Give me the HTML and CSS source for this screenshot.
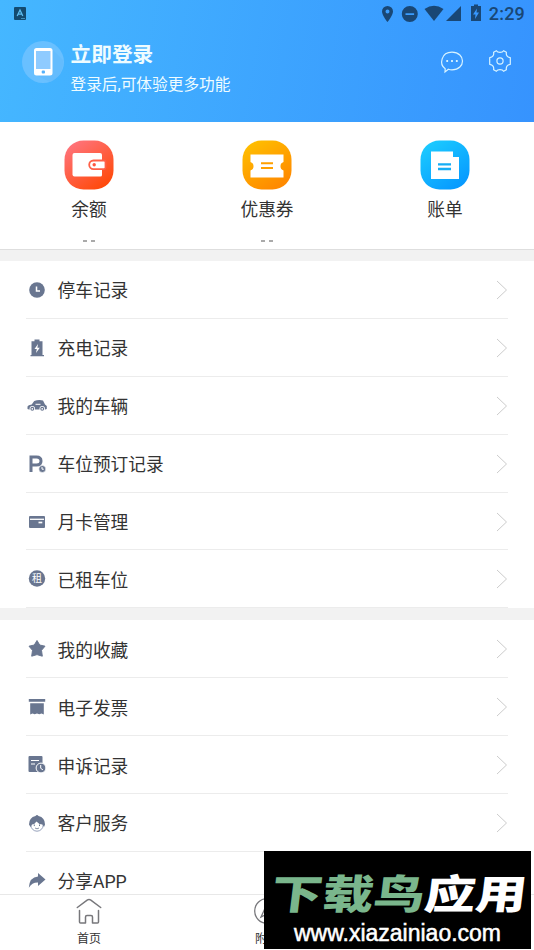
FILE: index.html
```html
<!DOCTYPE html>
<html lang="zh-CN">
<head>
<meta charset="utf-8">
<title>我的</title>
<link rel="stylesheet" href="styles.css">
</head>
<body>
<div class="app">
  <header class="header">
    <div class="status">
      <svg class="status-app" width="12" height="13" viewBox="0 0 12 13"><rect width="12" height="13" rx="1" fill="#134a70"/><path d="M3.2 9 6 3l2.800 6M4.200 7.200h3.600" fill="none" stroke="#5dbcf0" stroke-width="1.300"/><path d="M7 11.500h4" stroke="#5dbcf0" stroke-width=".6"/></svg>
      <div class="status-right">
        <svg width="114" height="20" viewBox="0 0 114 20" fill="#194775">
          <path fill-rule="evenodd" d="M11.500 6a5.500 5.500 0 0 0-5.500 5.500C6 15.500 11.500 22 11.500 22S17 15.500 17 11.500A5.500 5.500 0 0 0 11.500 6zm0 3.500a2 2 0 1 1 0 4 2 2 0 0 1 0-4z" transform="translate(0 -6)"/>
          <path fill-rule="evenodd" d="M33.800 0a7.800 7.800 0 1 0 0 16 7.800 7.800 0 0 0 0-16zM29.500 7.200h8.600v1.700h-8.600z"/>
          <path d="M48.500 3Q58-3.500 67.500 3L58 15z"/>
          <path d="M85 0v15H70z"/>
          <path fill-rule="evenodd" d="M95 0h3v-1.500h4V0h3v15H95zM101 2.500l-4 6h2.500L99 13l4-6.500h-2.500z"/>
        </svg>
        <span class="time">2:29</span>
      </div>
    </div>
    <div class="profile">
      <svg class="avatar" width="42" height="42" viewBox="0 0 42 42"><circle cx="21" cy="21" r="21" fill="#69c0ff"/><path d="M31 9 41 19a21 21 0 0 1-13 22L14 34z" fill="#5fb7fb" opacity=".5"/><rect x="12" y="7" width="18.500" height="27.500" rx="2.500" fill="#fff"/><path d="M14 10h14.500v18H14z" fill="#8fcbff"/><rect x="19.700" y="29.500" width="3.300" height="3" rx="1" fill="#55b1fa"/></svg>
      <div class="login"><h1>立即登录</h1><p>登录后,可体验更多功能</p></div>
      <svg width="24" height="24" viewBox="0 0 24 24" fill="none" stroke="#d7f3ff" stroke-width="1.200"><path d="M5.200 18.700C-1 14.500 1 2.200 12 2.200c14 0 14 17.600 0 17.600-1.500 0-2.600-.2-3.600-.6L5 22z"/><path d="M6.300 11h1.800m3 0h1.800m3 0h1.800" stroke-width="1.900"/></svg>
      <svg class="gear" width="24" height="24" viewBox="0 0 24 24" fill="none" stroke="#d7f3ff" stroke-width="1.200" stroke-linejoin="round"><circle cx="12" cy="12" r="3.100"/><path d="M8.400 1.700Q9.300 3.300 12 3.300t3.600-1.600l2.800 1.600q-.8 4.600 3.900 5.400v6.600q-4.700.8-3.900 5.400l-2.800 1.600Q14.700 20.700 12 20.700t-3.600 1.600l-2.800-1.600q.8-4.600-3.900-5.400V8.700q4.700-.8 3.900-5.400z"/></svg>
    </div>
  </header>

  <main class="content">
    <section class="quick">
      <div class="quick-item">
        <svg width="50" height="50" viewBox="0 0 50 50"><defs><linearGradient id="red" x1="0" y1="0" x2=".7" y2="1"><stop stop-color="#ff7888"/><stop offset="1" stop-color="#ff4a0c"/></linearGradient></defs><rect x=".5" y=".5" width="49" height="49" rx="19" fill="url(#red)"/><path d="M10.500 13H36q2 0 2 2v20q0 1.500-1.500 1.500H10.500q-2 0-2-2V15q0-2 2-2z" fill="#fff"/><path d="M40 20.500H29.500a4.300 4.300 0 0 0 0 8.600H40q1.500 0 1.500-1.500V22q0-1.500-1.500-1.500z" fill="#fff" stroke="#ff6048" stroke-width="1.800"/><circle cx="30.200" cy="24.700" r="1.700" fill="#ff5741"/></svg>
        <span class="quick-label">余额</span><span class="quick-value"><i></i><i></i></span>
      </div>
      <div class="quick-item">
        <svg width="50" height="50" viewBox="0 0 50 50"><defs><linearGradient id="gold" x1="0" y1="0" x2=".6" y2="1"><stop stop-color="#ffc400"/><stop offset="1" stop-color="#ff8a00"/></linearGradient></defs><rect x=".5" y=".5" width="49" height="49" rx="19" fill="url(#gold)"/><path d="M8.500 14.500h33V22a4.500 4.500 0 0 0 0 8.500v7h-33v-7a4.500 4.500 0 0 0 0-8.500z" fill="#fff"/><path d="M19 23.200h12M19 28h12" stroke="#ffa000" stroke-width="2"/></svg>
        <span class="quick-label">优惠券</span><span class="quick-value"><i></i><i></i></span>
      </div>
      <div class="quick-item">
        <svg width="50" height="50" viewBox="0 0 50 50"><defs><linearGradient id="blue" x1="0" y1="0" x2=".7" y2="1"><stop stop-color="#1ed0ff"/><stop offset="1" stop-color="#079aff"/></linearGradient></defs><rect x=".5" y=".5" width="49" height="49" rx="19" fill="url(#blue)"/><path d="M11 11.500h22v5.500h6v22H11z" fill="#fff"/><path d="M18 24.300h13M18 29h13" stroke="#16adf5" stroke-width="2.300"/></svg>
        <span class="quick-label">账单</span>
      </div>
    </section>

    <ul class="menu">
      <li class="row"><svg class="icon" viewBox="0 0 20 20"><circle cx="10" cy="10" r="7.800"/><path class="cut" d="M9.500 6.500v4.400H13"/></svg><span>停车记录</span><svg class="arrow" viewBox="0 0 12 20"><path d="m1 1 9.500 9L1 19"/></svg></li>
      <li class="row"><svg class="icon" viewBox="0 0 20 20"><path d="M4.500 3.300h3V1.500h5v1.800h3V17H17v1.300H3.500V17h1z"/><path d="m11 6-3.500 5h2.300L9 15l3.800-5.300h-2.400z" fill="#fff"/></svg><span>充电记录</span><svg class="arrow" viewBox="0 0 12 20"><path d="m1 1 9.500 9L1 19"/></svg></li>
      <li class="row"><svg class="icon" viewBox="0 0 20 20"><path d="M.5 13V10.500q.5-1.300 4.200-2L7.200 5q4.500-1.500 8.800-.5l2 4 1.800 1.500v3l-1.500.5H2z"/><path d="M8.500 8.300h5" stroke="#fff" stroke-width="1"/><g fill="#fff"><circle cx="5.300" cy="12.800" r="2.700"/><circle cx="15.200" cy="12.800" r="2.700"/></g><circle cx="5.300" cy="12.800" r="1.400" fill="none" stroke="#697690" stroke-width="1.100"/><circle cx="15.200" cy="12.800" r="1.400" fill="none" stroke="#697690" stroke-width="1.100"/></svg><span>我的车辆</span><svg class="arrow" viewBox="0 0 12 20"><path d="m1 1 9.500 9L1 19"/></svg></li>
      <li class="row"><svg class="icon" viewBox="0 0 20 20"><path d="M4 18V3h5.500Q14 3 14 7t-4.500 4H4" fill="none" stroke="#697690" stroke-width="3"/><circle cx="15.300" cy="15" r="3.500" stroke="#fff" stroke-width=".6"/><path class="cut fine" d="M15 13v2.200h1.800"/></svg><span>车位预订记录</span><svg class="arrow" viewBox="0 0 12 20"><path d="m1 1 9.500 9L1 19"/></svg></li>
      <li class="row"><svg class="icon" viewBox="0 0 20 20"><rect x="2" y="4" width="16" height="12" rx="1"/><path d="M3 7.300h14" stroke="#fff" stroke-width="1.300"/><path d="M11.500 10.500h3.800" stroke="#fff" stroke-width="1.700"/></svg><span>月卡管理</span><svg class="arrow" viewBox="0 0 12 20"><path d="m1 1 9.500 9L1 19"/></svg></li>
      <li class="row"><svg class="icon" viewBox="0 0 20 20"><circle cx="10" cy="9.500" r="8.200"/><text x="10" y="13.100" text-anchor="middle" class="rent">租</text></svg><span>已租车位</span><svg class="arrow" viewBox="0 0 12 20"><path d="m1 1 9.500 9L1 19"/></svg></li>
    </ul>

    <ul class="menu">
      <li class="row"><svg class="icon" viewBox="0 0 20 20"><path d="m10 1.500 2.700 4.500 5.300 1.200-3.500 4.100.8 5.900-5.300-1.600-5.300 1.600.8-5.900L2 7.200 7.300 6z" stroke="#697690" stroke-linejoin="round"/></svg><span>我的收藏</span><svg class="arrow" viewBox="0 0 12 20"><path d="m1 1 9.500 9L1 19"/></svg></li>
      <li class="row"><svg class="icon" viewBox="0 0 20 20"><path d="M1.800 2h16.400v2.800H1.800zM3.200 6.200h13.600V17.500l-2.300-1-2.200.7-2.300-.7-2.300.7-2.200-.7-2.300 1z"/></svg><span>电子发票</span><svg class="arrow" viewBox="0 0 12 20"><path d="m1 1 9.500 9L1 19"/></svg></li>
      <li class="row"><svg class="icon" viewBox="0 0 20 20"><path d="M2.500 1h12q1 0 1 1v15h-13q-1 0-1-1V2q0-1 1-1z"/><path d="M4 5.500h8M4 9h4" stroke="#fff" stroke-width="1.200"/><circle cx="14" cy="13" r="4.900" stroke="#fff"/><path class="cut fine" d="M13.700 10v3.300l2.200 1.500"/></svg><span>申诉记录</span><svg class="arrow" viewBox="0 0 12 20"><path d="m1 1 9.500 9L1 19"/></svg></li>
      <li class="row"><svg class="icon" viewBox="0 0 20 20"><circle cx="10" cy="12" r="6.200" fill="#fff" stroke="#7b89aa" stroke-width=".8"/><path d="M2 11.500Q2 4.500 8.500 3q1.500-2 3 0Q18 4.500 18 11.500l-1 2.500-1.500-2.500q-4-.2-6-3-1.500 2.500-4.500 3L3.500 14z"/><path d="M7.300 11.500v1.600m5.200-1.600v1.600" stroke="#697690"/><path d="M8 15q2 1.600 4 0" fill="none" stroke="#697690" stroke-width=".8"/></svg><span>客户服务</span><svg class="arrow" viewBox="0 0 12 20"><path d="m1 1 9.500 9L1 19"/></svg></li>
      <li class="row"><svg class="icon" viewBox="0 0 20 20"><path d="M11 2 18.500 8.500 11 15v-3.500q-6-.2-9.200 5.300Q2.500 6 11 5.500z"/></svg><span>分享APP</span><svg class="arrow" viewBox="0 0 12 20"><path d="m1 1 9.500 9L1 19"/></svg></li>
    </ul>
  </main>

  <nav class="tabs">
    <a class="tab"><svg width="26" height="26" viewBox="0 0 26 26" fill="none" stroke="#77777b" stroke-width="1.500" stroke-linecap="round" stroke-linejoin="round"><path d="m1.300 9.500 10.200-7.600q1.500-1 3 0l10.200 7.600M3.500 12.500V24q0 1 1 1h5v-6q0-1.500 1.500-1.500h4q1.500 0 1.500 1.500v6h5q1 0 1-1V12.500"/></svg><span>首页</span></a>
    <a class="tab"><svg width="26" height="26" viewBox="0 0 26 26" fill="none" stroke="#77777b" stroke-width="1.300"><circle cx="13" cy="13" r="12.300"/><path d="m7 19 6-13 6 13-6-3z"/></svg><span>附近</span></a>
    <a class="tab"></a>
  </nav>

  <aside class="brand">
    <div class="brand-name"><span>下载鸟</span>应用</div>
    <div class="brand-url">www.xiazainiao.com</div>
  </aside>
</div>
</body>
</html>
```
FILE: styles.css
```css
* { box-sizing: border-box; }
body {
  margin: 0;
  color: #333;
  background: #fff;
  font-family: Roboto, "Noto Sans CJK SC", sans-serif;
}
.app {
  position: relative;
  display: flex;
  flex-direction: column;
  height: 950px;
  overflow: hidden;
}
h1, p, ul { margin: 0; padding: 0; }
svg { display: block; flex: none; overflow: visible; }

.header {
  flex: none;
  height: 122px;
  color: #effcff;
  background: linear-gradient(100deg, #45b7ff, #3693fe);
}
.status {
  display: flex;
  justify-content: space-between;
  height: 30px;
  padding: 6px 9px 0 14px;
}
.status-app { margin-top: 1px; }
.status-right { display: flex; }
.status-right svg { margin-right: -1px; }
.time {
  color: #194775;
  font-size: 18px;
  font-weight: 500;
  line-height: 16px;
  letter-spacing: .2px;
}
.profile {
  display: flex;
  padding: 11px 22px 0;
}
.login { flex: 1; margin-left: 6.500px; }
.login h1 { margin-top: 1px; font-size: 20.700px; font-weight: 700; line-height: 26px; }
.login p { margin-top: 4.500px; font-size: 15.700px; line-height: 24px; white-space: nowrap; }
.profile > svg:not(.avatar) { margin-top: 9px; }
.profile .gear { margin-left: 24px; }
.profile > svg.gear:not(.avatar) { margin-top: 8px; }

.content { flex: 1; min-height: 0; overflow: hidden; }
.quick {
  display: grid;
  grid-template-columns: repeat(3, 1fr);
  height: 128px;
  padding-top: 17.500px;
  border-bottom: 1px solid #dedede;
}
.quick-item { display: flex; flex-direction: column; align-items: center; }
.quick-label { margin-top: 7.500px; font-size: 17.700px; line-height: 26px; }
.quick-value { display: flex; gap: 4px; margin-top: 17px; }
.quick-value i { width: 4px; height: 1.500px; background: #aaa; }

.menu {
  list-style: none;
  border-top: 11px solid #f2f2f2;
  padding: 0 26px;
}
.menu + .menu { border-top: 12px solid #f2f2f2; }
.row {
  display: flex;
  align-items: center;
  height: 57.900px;
  padding: 1px 0 0 1px;
  border-bottom: 1px solid #ececec;
  font-size: 17.700px;
}
.row > span { flex: 1; margin: -1px 0 0 10.500px; }
.icon { width: 20px; height: 20px; fill: #697690; }
.cut { fill: none; stroke: #fff; stroke-width: 1.500; }
.fine { stroke-width: 1; }
.rent { fill: #fff; font-size: 10px; }
.arrow { width: 12px; height: 20px; fill: none; stroke: #ccc; stroke-width: 1; }

.tabs {
  flex: none;
  display: grid;
  grid-template-columns: repeat(3, 1fr);
  height: 56px;
  border-top: 1px solid #e8e8e8;
  background: #fff;
}
.tab {
  display: flex;
  flex-direction: column;
  align-items: center;
  padding-top: 3px;
  font-size: 12px;
}
.tab span { margin-top: 6px; line-height: 18px; }

.brand {
  position: absolute;
  left: 264px;
  top: 851px;
  width: 267px;
  height: 98px;
  color: #fff;
  background: #000;
}
.brand-name {
  width: 220px;
  margin: 13px 0 0 8px;
  font: 900 44px/56px "Noto Sans CJK SC", sans-serif;
  transform: skewX(-7deg) scale(1.160, .92);
  transform-origin: 0 50%;
  white-space: nowrap;
}
.brand-name span { color: #7ab68c; }
.brand-url {
  font: 23px/26px "Liberation Sans", sans-serif;
  text-align: center;
  -webkit-text-stroke: .5px #fff;
}
```
